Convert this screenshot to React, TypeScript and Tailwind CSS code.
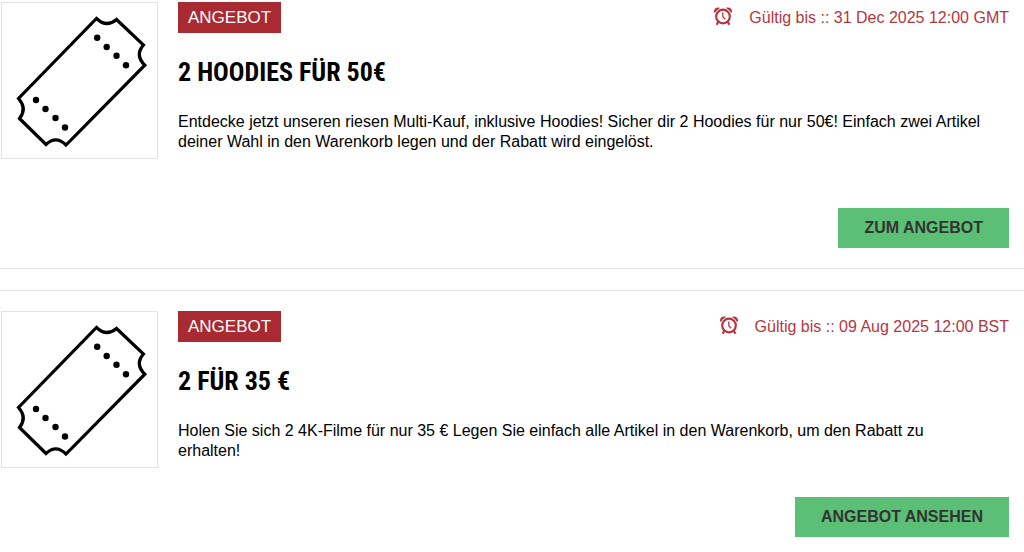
type Offer = {
  title: string;
  text: string;
  expiry: string;
  action: string;
  spacing: string;
};

const offers: Offer[] = [
  {
    title: '2 HOODIES FÜR 50€',
    text: 'Entdecke jetzt unseren riesen Multi-Kauf, inklusive Hoodies! Sicher dir 2 Hoodies für nur 50€! Einfach zwei Artikel deiner Wahl in den Warenkorb legen und der Rabatt wird eingelöst.',
    expiry: '31 Dec 2025 12:00 GMT',
    action: 'ZUM ANGEBOT',
    spacing: 'mb-14',
  },
  {
    title: '2 FÜR 35 €',
    text: 'Holen Sie sich 2 4K-Filme für nur 35 € Legen Sie einfach alle Artikel in den Warenkorb, um den Rabatt zu erhalten!',
    expiry: '09 Aug 2025 12:00 BST',
    action: 'ANGEBOT ANSEHEN',
    spacing: 'mb-9',
  },
];

// perforation holes at both ends of the ticket
const dots = [
  [95.2, 34.8],
  [104.7, 44],
  [114.5, 52.8],
  [124, 62.2],
  [34, 97],
  [43.5, 106],
  [53.5, 115],
  [63, 124.5],
];

function TicketIcon() {
  return (
    <svg viewBox="0 0 155 155" className="block w-full" aria-hidden="true">
      <path
        d="M94.5 15.5 Q104.5 25 114.5 16.5 L141.5 42 Q132.5 52 142.8 62.2 L64 142 Q54 132 44 141.5 L17.5 115.5 Q25.5 105.5 16.5 95.5 Z"
        fill="none"
        stroke="#000"
        strokeWidth="3.2"
      />
      {dots.map(([cx, cy]) => (
        <circle key={`${cx}-${cy}`} cx={cx} cy={cy} r="3.2" />
      ))}
    </svg>
  );
}

function AlarmIcon() {
  return (
    <svg viewBox="0 0 20 20" className="my-1 size-5 shrink-0" fill="none" stroke="#b5363f" aria-hidden="true">
      <circle cx="10" cy="10.5" r="6.8" strokeWidth="2.2" />
      <path d="M9.8 6.5 L9.8 10.8 L12.2 13.2" strokeWidth="1.3" />
      <path
        d="M1 6.5 Q0.5 1 6.5 1.5 L6.5 2.5 Q3.5 4 2.2 6.8 Z M19 6.5 Q19.5 1 13.5 1.5 L13.5 2.5 Q16.5 4 17.8 6.8 Z"
        fill="#b5363f"
        stroke="none"
      />
      <path d="M5.3 15.5 L3.7 18.8 M14.7 15.5 L16.3 18.8" strokeWidth="2.2" />
    </svg>
  );
}

function OfferCard({ offer }: { offer: Offer }) {
  return (
    <article className="flex gap-5 border-y border-[#e3e3e3] py-5 pl-px pr-[15px]">
      <div className="w-[157px] shrink-0 self-start border border-[#e3e3e3]">
        <TicketIcon />
      </div>

      <div className="flex grow flex-col">
        <div className="flex items-start justify-between">
          <span className="bg-[#a92a31] px-2.5 py-1 text-[17px] leading-[23px] text-white">ANGEBOT</span>
          <p className="-mb-1 flex items-start gap-4 leading-8 text-[#b5363f]">
            <AlarmIcon />
            <span>Gültig bis :: {offer.expiry}</span>
          </p>
        </div>

        <h2 className="mt-[23px] font-['Roboto_Condensed','Liberation_Sans_Narrow','Liberation_Sans',sans-serif] text-[26px] font-bold leading-8">
          {offer.title}
        </h2>
        <p className={`mt-6 pr-6 leading-5 ${offer.spacing}`}>{offer.text}</p>

        <button
          type="button"
          className="self-end bg-[#5bbf75] px-[26px] py-2 font-bold text-[#333]"
        >
          {offer.action}
        </button>
      </div>
    </article>
  );
}

export default function App() {
  return (
    <main className="-mt-[19px] flex flex-col gap-[21px] bg-white font-['Liberation_Sans',Arial,sans-serif] text-base text-black">
      {offers.map((offer) => (
        <OfferCard key={offer.title} offer={offer} />
      ))}
    </main>
  );
}
